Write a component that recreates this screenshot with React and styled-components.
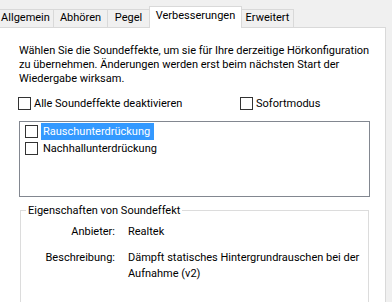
import React from "react";
import styled, { createGlobalStyle } from "styled-components";

const GlobalStyle = createGlobalStyle`
  html, body { margin: 0; padding: 0; background: #f0f0f0; }
  body {
    font-family: "Segoe UI", Roboto, "Liberation Sans", Arial, sans-serif;
    font-size: 11px;
    color: #000;
  }
`;

const Window = styled.div`
  width: 392px;
  height: 302px;
  overflow: hidden;
  background: #f0f0f0;
  display: flex;
  flex-direction: column;
`;

const TabStrip = styled.div`
  flex: none;
  height: 27px;
  display: flex;
  align-items: flex-end;
  margin-left: -2px;
  position: relative;
  z-index: 1;
`;

const Tab = styled.div`
  box-sizing: border-box;
  flex: none;
  width: ${(p) => p.$w}px;
  height: ${(p) => (p.$active ? 22 : 18)}px;
  margin-left: -1px;
  margin-bottom: ${(p) => (p.$active ? -1 : 0)}px;
  padding-top: ${(p) => (p.$active ? 1 : 0)}px;
  border: 1px solid #d9d9d9;
  border-bottom: none;
  background: ${(p) => (p.$active ? "#fff" : "#f0f0f0")};
  text-align: center;
  line-height: 15px;
  white-space: nowrap;
  position: relative;
  z-index: ${(p) => (p.$active ? 2 : 1)};
`;

const Panel = styled.div`
  box-sizing: border-box;
  width: 387px;
  margin-left: -1px;
  flex: 1;
  min-height: 0;
  overflow: hidden;
  background: #fff;
  border: 1px solid #d9d9d9;
  border-bottom: none;
  padding: 16px 0 0 19px;
  display: flex;
  flex-direction: column;
`;

const Intro = styled.p`
  margin: 0;
  line-height: 14px;
  white-space: nowrap;
`;

const OptionRow = styled.div`
  flex: none;
  margin-top: 10px;
  display: grid;
  grid-template-columns: 222px auto;
  margin-left: -1px;
`;

const CheckLabel = styled.label`
  display: flex;
  align-items: center;
  gap: 3px;
  line-height: 15px;
  white-space: nowrap;
`;

const Box = styled.span`
  box-sizing: border-box;
  width: 13px;
  height: 13px;
  flex: none;
  border: 1px solid #333;
  background: #fff;
`;

const ListBox = styled.div`
  box-sizing: border-box;
  flex: none;
  margin-top: 10px;
  width: 351px;
  height: 76px;
  border: 1px solid #828790;
  padding: 1px 0 0 5px;
  display: flex;
  flex-direction: column;
`;

const ListItem = styled.div`
  flex: none;
  height: 17px;
  display: flex;
  align-items: center;
  gap: 3px;
`;

const ItemText = styled.span`
  line-height: 17px;
  padding: 0 4px 0 2px;
  white-space: nowrap;
  background: ${(p) => (p.$selected ? "#3399ff" : "transparent")};
  color: ${(p) => (p.$selected ? "#fff" : "#000")};
`;

const Group = styled.fieldset`
  box-sizing: border-box;
  flex: none;
  margin: 6px 0 0 1px;
  padding: 0;
  width: 349px;
  height: 110px;
  min-width: 0;
  border: 1px solid #dcdcdc;
`;

const GroupTitle = styled.legend`
  margin-left: 5px;
  padding: 0 2px;
  line-height: 15px;
`;

const Props = styled.div`
  display: grid;
  grid-template-columns: 94px auto;
  column-gap: 13px;
  row-gap: 10px;
  padding-top: 6px;
  line-height: 16px;
`;

const PropName = styled.div`
  text-align: right;
  white-space: nowrap;
`;

const PropValue = styled.div`
  white-space: nowrap;
`;

const tabs = [
  { label: "Allgemein", w: 57 },
  { label: "Abhören", w: 55 },
  { label: "Pegel", w: 43 },
  { label: "Verbesserungen", w: 93, active: true },
  { label: "Erweitert", w: 53 },
];

export default function App() {
  return (
    <>
      <GlobalStyle />
      <Window>
        <TabStrip>
          {tabs.map((t) => (
            <Tab key={t.label} $w={t.w} $active={t.active}>
              {t.label}
            </Tab>
          ))}
        </TabStrip>
        <Panel>
          <Intro>
            Wählen Sie die Soundeffekte, um sie für Ihre derzeitige Hörkonfiguration
            <br />
            zu übernehmen. Änderungen werden erst beim nächsten Start der
            <br />
            Wiedergabe wirksam.
          </Intro>
          <OptionRow>
            <CheckLabel>
              <Box />
              Alle Soundeffekte deaktivieren
            </CheckLabel>
            <CheckLabel>
              <Box />
              Sofortmodus
            </CheckLabel>
          </OptionRow>
          <ListBox>
            <ListItem>
              <Box />
              <ItemText $selected>Rauschunterdrückung</ItemText>
            </ListItem>
            <ListItem>
              <Box />
              <ItemText>Nachhallunterdrückung</ItemText>
            </ListItem>
          </ListBox>
          <Group>
            <GroupTitle>Eigenschaften von Soundeffekt</GroupTitle>
            <Props>
              <PropName>Anbieter:</PropName>
              <PropValue>Realtek</PropValue>
              <PropName>Beschreibung:</PropName>
              <PropValue>
                Dämpft statisches Hintergrundrauschen bei der
                <br />
                Aufnahme (v2)
              </PropValue>
            </Props>
          </Group>
        </Panel>
      </Window>
    </>
  );
}
